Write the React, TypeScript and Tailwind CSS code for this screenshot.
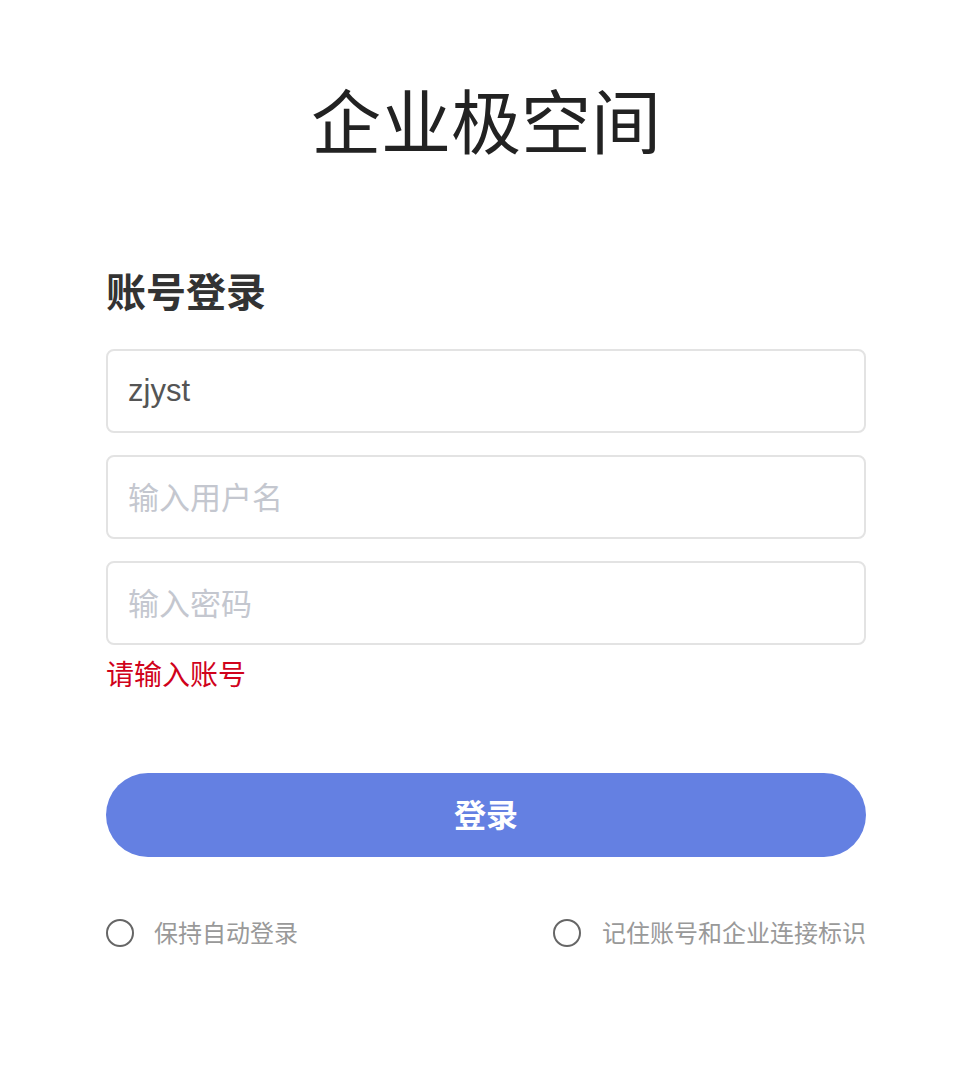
export default function App() {
  return (
    <div
      className="min-h-[1088px] bg-white"
      style={{ fontFamily: '"Noto Sans", "Noto Sans CJK SC", sans-serif' }}
    >
      <div className="pl-[106px] w-[866px]">
        <h1 className="pt-[72px] text-center text-[70px] leading-[100px] font-normal text-[#222]">
          企业极空间
        </h1>

        <h2 className="mt-[95px] text-[40px] leading-[50px] font-bold text-[#333]">账号登录</h2>

        <div className="mt-[32px] flex flex-col gap-[22px]">
          <input
            defaultValue="zjyst"
            className="h-[84px] w-full rounded-[8px] border-2 border-[#e3e3e3] px-[20px] text-[31px] text-[#555] outline-none"
            style={{ fontFamily: '"Liberation Sans", "Noto Sans CJK SC", sans-serif' }}
          />
          <input
            placeholder="输入用户名"
            className="h-[84px] w-full rounded-[8px] border-2 border-[#e3e3e3] px-[20px] text-[31px] text-[#555] outline-none placeholder:text-[#c4c7cf]"
          />
          <input
            type="password"
            placeholder="输入密码"
            className="h-[84px] w-full rounded-[8px] border-2 border-[#e3e3e3] px-[20px] text-[31px] text-[#555] outline-none placeholder:text-[#c4c7cf]"
          />
        </div>

        <p className="mt-[9px] text-[28px] leading-[40px] text-[#d0021b]">请输入账号</p>

        <button className="mt-[79px] h-[84px] w-full rounded-full bg-[#6480e2] text-[32px] font-bold text-white">
          登录
        </button>

        <div className="mt-[58px] flex items-center justify-between">
          <label className="flex items-center gap-[20px]">
            <span className="h-[28px] w-[28px] rounded-full border-2 border-[#666]" />
            <span className="text-[24px] leading-[36px] text-[#999]">保持自动登录</span>
          </label>
          <label className="flex items-center gap-[21px]">
            <span className="h-[28px] w-[28px] rounded-full border-2 border-[#666]" />
            <span className="text-[24px] leading-[36px] text-[#999]">记住账号和企业连接标识</span>
          </label>
        </div>
      </div>
    </div>
  );
}
